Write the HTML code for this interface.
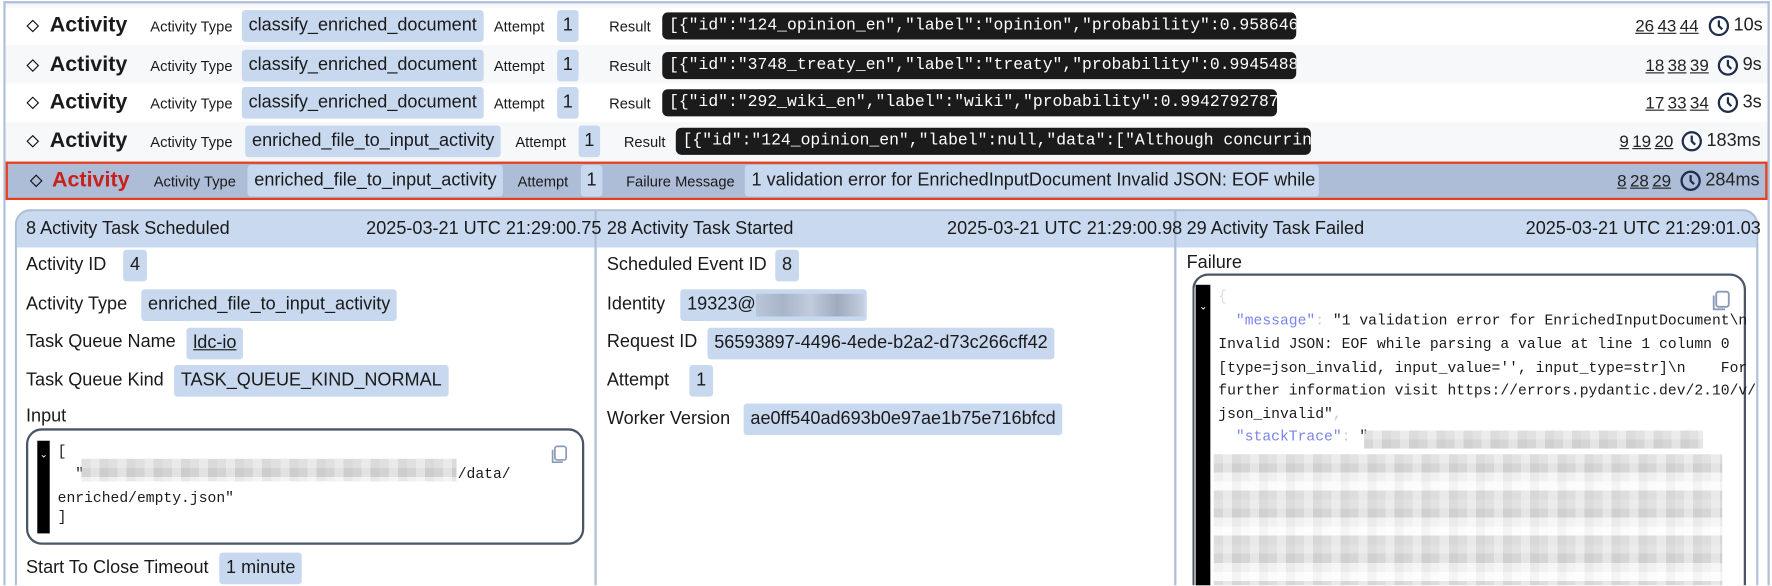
<!DOCTYPE html>
<html><head><meta charset="utf-8"><style>
*{margin:0;padding:0;box-sizing:border-box}
html,body{width:1772px;height:586px;overflow:hidden}
body{background:#fff;font-family:"Liberation Sans","DejaVu Sans",sans-serif;color:#1a1a1a;position:relative}
#w{position:absolute;left:0;top:0;width:1568px;height:518px;overflow:hidden;transform:scale(1.1301);transform-origin:0 0}
.a{position:absolute;white-space:nowrap}
.row{position:absolute;left:5px;width:1559px}
.dia{position:absolute;width:8px;height:8px;border:1.5px solid #111;transform:rotate(45deg)}
.act{font-weight:bold;font-size:19px}
.sm{font-size:13px}
.chip{background:#c8d8ef;border-radius:3px;font-size:16px;padding:0 6px;height:28px;line-height:28px}
.code{background:#1b1b1b;color:#fff;border-radius:5px;font-family:"Liberation Mono",monospace;font-size:14.5px;height:24px;line-height:24px;padding:0 6px;overflow:hidden}
.num{font-size:15px;color:#222}
.num u{margin-right:3px}
.lbl{font-size:16px}
.mono{font-family:"Liberation Mono","DejaVu Sans Mono",monospace;font-size:13px}
.blur{background:
repeating-linear-gradient(90deg,rgba(255,255,255,0) 0 8px,rgba(255,255,255,.35) 8px 16px,rgba(0,0,0,.04) 16px 24px),
repeating-linear-gradient(180deg,#d9d9d9 0 8px,#c9c9cb 8px 16px,#ececec 16px 24px,#fafafa 24px 32px,#d2d2d4 32px 40px);}
</style></head><body><div id="w">
<div class="a" style="left:3px;top:1px;width:1563px;height:517px;border:2px solid #b0bfd9;border-bottom:none;background:#f7f8fa"></div>

<div class="row" style="top:7px;height:33px;background:#fff"></div>
<div class="row" style="top:40px;height:34px;background:#f7f8fa"></div>
<div class="row" style="top:74px;height:34px;background:#fff"></div>
<div class="row" style="top:108px;height:34px;background:#f7f8fa"></div>
<div class="a" style="left:5px;top:143px;width:1559px;height:34px;background:#adbdd8;border:2px solid #e8401c"></div>
<div class="row" style="top:177px;height:341px;background:#fff"></div>

<div class="dia" style="left:25px;top:19px"></div>
<div class="a act" style="left:44px;top:12px">Activity</div>
<div class="a sm" style="left:133px;top:16px">Activity Type</div>
<div class="a chip" style="left:214px;top:9px">classify_enriched_document</div>
<div class="a sm" style="left:437px;top:16px">Attempt</div>
<div class="a chip" style="left:493px;top:9px;padding:0 5px">1</div>
<div class="a sm" style="left:539px;top:16px">Result</div>
<div class="a code" style="left:586px;top:11px;width:561px">[{"id":"124_opinion_en","label":"opinion","probability":0.958646452840699</div>
<div class="a num" style="left:1447px;top:15px"><u>26</u><u>43</u><u>44</u></div>

<div class="dia" style="left:25px;top:54px"></div>
<div class="a act" style="left:44px;top:47px">Activity</div>
<div class="a sm" style="left:133px;top:51px">Activity Type</div>
<div class="a chip" style="left:214px;top:44px">classify_enriched_document</div>
<div class="a sm" style="left:437px;top:51px">Attempt</div>
<div class="a chip" style="left:493px;top:44px;padding:0 5px">1</div>
<div class="a sm" style="left:539px;top:51px">Result</div>
<div class="a code" style="left:586px;top:46px;width:561px">[{"id":"3748_treaty_en","label":"treaty","probability":0.9945488727818601</div>
<div class="a num" style="left:1456px;top:50px"><u>18</u><u>38</u><u>39</u></div>

<div class="dia" style="left:25px;top:87px"></div>
<div class="a act" style="left:44px;top:80px">Activity</div>
<div class="a sm" style="left:133px;top:84px">Activity Type</div>
<div class="a chip" style="left:214px;top:77px">classify_enriched_document</div>
<div class="a sm" style="left:437px;top:84px">Attempt</div>
<div class="a chip" style="left:493px;top:77px;padding:0 5px">1</div>
<div class="a sm" style="left:539px;top:84px">Result</div>
<div class="a code" style="left:586px;top:79px;width:544px">[{"id":"292_wiki_en","label":"wiki","probability":0.9942792787077419}]</div>
<div class="a num" style="left:1456px;top:83px"><u>17</u><u>33</u><u>34</u></div>

<div class="dia" style="left:25px;top:121px"></div>
<div class="a act" style="left:44px;top:114px">Activity</div>
<div class="a sm" style="left:133px;top:118px">Activity Type</div>
<div class="a chip" style="left:217px;top:111px">enriched_file_to_input_activity</div>
<div class="a sm" style="left:456px;top:118px">Attempt</div>
<div class="a chip" style="left:512px;top:111px;padding:0 5px">1</div>
<div class="a sm" style="left:552px;top:118px">Result</div>
<div class="a code" style="left:598px;top:113px;width:562px">[{"id":"124_opinion_en","label":null,"data":["Although concurring in the</div>
<div class="a num" style="left:1433px;top:117px"><u>9</u><u>19</u><u>20</u></div>

<div class="dia" style="left:28px;top:156px"></div>
<div class="a act" style="left:46px;top:149px;color:#c8201a">Activity</div>
<div class="a sm" style="left:136px;top:153px">Activity Type</div>
<div class="a chip" style="left:219px;top:146px">enriched_file_to_input_activity</div>
<div class="a sm" style="left:458px;top:153px">Attempt</div>
<div class="a chip" style="left:514px;top:146px;padding:0 5px">1</div>
<div class="a sm" style="left:554px;top:153px">Failure Message</div>
<div class="a chip" style="left:659px;top:146px;width:508px;overflow:hidden">1 validation error for EnrichedInputDocument Invalid JSON: EOF while parsing</div>
<div class="a num" style="left:1431px;top:152px"><u>8</u><u>28</u><u>29</u></div>

<svg class="a" style="left:1511px;top:13px" width="20" height="20" viewBox="0 0 20 20"><circle cx="10" cy="10" r="8" fill="none" stroke="#1f2d4a" stroke-width="2"/><path d="M10 5v5l3 3" fill="none" stroke="#1f2d4a" stroke-width="2"/></svg>
<div class="a num" style="left:1534px;top:14px;font-size:16px">10s</div>
<svg class="a" style="left:1519px;top:48px" width="20" height="20" viewBox="0 0 20 20"><circle cx="10" cy="10" r="8" fill="none" stroke="#1f2d4a" stroke-width="2"/><path d="M10 5v5l3 3" fill="none" stroke="#1f2d4a" stroke-width="2"/></svg>
<div class="a num" style="left:1542px;top:49px;font-size:16px">9s</div>
<svg class="a" style="left:1519px;top:81px" width="20" height="20" viewBox="0 0 20 20"><circle cx="10" cy="10" r="8" fill="none" stroke="#1f2d4a" stroke-width="2"/><path d="M10 5v5l3 3" fill="none" stroke="#1f2d4a" stroke-width="2"/></svg>
<div class="a num" style="left:1542px;top:82px;font-size:16px">3s</div>
<svg class="a" style="left:1487px;top:115px" width="20" height="20" viewBox="0 0 20 20"><circle cx="10" cy="10" r="8" fill="none" stroke="#1f2d4a" stroke-width="2"/><path d="M10 5v5l3 3" fill="none" stroke="#1f2d4a" stroke-width="2"/></svg>
<div class="a num" style="left:1510px;top:116px;font-size:16px">183ms</div>
<svg class="a" style="left:1486px;top:150px" width="20" height="20" viewBox="0 0 20 20"><circle cx="10" cy="10" r="8" fill="none" stroke="#1f2d4a" stroke-width="2"/><path d="M10 5v5l3 3" fill="none" stroke="#1f2d4a" stroke-width="2"/></svg>
<div class="a num" style="left:1509px;top:151px;font-size:16px">284ms</div>

<div class="a" style="left:13px;top:185px;width:1543px;height:333px;border:2px solid #b0bfd9;border-bottom:none;border-radius:14px 14px 0 0;background:#fff"></div>
<div class="a" style="left:15px;top:187px;width:1539px;height:32px;background:#c9d9ef;border-radius:12px 12px 0 0"></div>
<div class="a" style="left:526px;top:186px;width:2px;height:332px;background:#b0bfd9"></div>
<div class="a" style="left:1039px;top:186px;width:2px;height:332px;background:#b0bfd9"></div>

<div class="a lbl" style="left:23px;top:194px">8 Activity Task Scheduled</div>
<div class="a lbl" style="left:324px;top:194px">2025-03-21 UTC 21:29:00.75</div>
<div class="a lbl" style="left:537px;top:194px">28 Activity Task Started</div>
<div class="a lbl" style="left:838px;top:194px">2025-03-21 UTC 21:29:00.98</div>
<div class="a lbl" style="left:1050px;top:194px">29 Activity Task Failed</div>
<div class="a lbl" style="left:1350px;top:194px">2025-03-21 UTC 21:29:01.03</div>

<div class="a lbl" style="left:23px;top:226px">Activity ID</div>
<div class="a chip" style="left:109px;top:221px;padding:0 6px">4</div>
<div class="a lbl" style="left:23px;top:261px">Activity Type</div>
<div class="a chip" style="left:125px;top:256px">enriched_file_to_input_activity</div>
<div class="a lbl" style="left:23px;top:294px">Task Queue Name</div>
<div class="a chip" style="left:165px;top:290px"><u>ldc-io</u></div>
<div class="a lbl" style="left:23px;top:328px">Task Queue Kind</div>
<div class="a chip" style="left:154px;top:323px">TASK_QUEUE_KIND_NORMAL</div>
<div class="a lbl" style="left:23px;top:360px">Input</div>
<div class="a" style="left:23px;top:379px;width:494px;height:103px;border:2px solid #4a5568;border-radius:14px"></div>
<div class="a" style="left:33px;top:390px;width:11px;height:82px;background:#000"></div>
<div class="a" style="left:35px;top:397px;color:#fff;font-size:9px">⌄</div>
<div class="a mono" style="left:51px;top:392px">[</div>
<div class="a mono" style="left:51px;top:412px">&nbsp;&nbsp;"</div>
<div class="a blur" style="left:72px;top:406px;width:332px;height:20px;opacity:.8"></div>
<div class="a mono" style="left:405px;top:412px">/data/</div>
<div class="a mono" style="left:51px;top:433px">enriched/empty.json"</div>
<div class="a mono" style="left:51px;top:450px">]</div>
<svg class="a" style="left:486px;top:394px" width="16" height="18" viewBox="0 0 16 18"><rect x="5" y="1" width="10" height="12" rx="2" fill="none" stroke="#8a9bb8" stroke-width="1.5"/><path d="M3 4v11h9" fill="none" stroke="#8a9bb8" stroke-width="1.5"/></svg>
<div class="a lbl" style="left:23px;top:494px">Start To Close Timeout</div>
<div class="a chip" style="left:194px;top:489px">1 minute</div>

<div class="a lbl" style="left:537px;top:226px">Scheduled Event ID</div>
<div class="a chip" style="left:686px;top:221px">8</div>
<div class="a lbl" style="left:537px;top:261px">Identity</div>
<div class="a chip" style="left:602px;top:256px;width:165px">19323@</div>
<div class="a" style="left:669px;top:260px;width:96px;height:20px;background:linear-gradient(90deg,#b8c3d6,#a4b0c4,#c0cadb,#9aa5b8,#c4cfe0);opacity:.9"></div>
<div class="a lbl" style="left:537px;top:294px">Request ID</div>
<div class="a chip" style="left:626px;top:290px">56593897-4496-4ede-b2a2-d73c266cff42</div>
<div class="a lbl" style="left:537px;top:328px">Attempt</div>
<div class="a chip" style="left:610px;top:323px">1</div>
<div class="a lbl" style="left:537px;top:362px">Worker Version</div>
<div class="a chip" style="left:658px;top:357px">ae0ff540ad693b0e97ae1b75e716bfcd</div>

<div class="a lbl" style="left:1050px;top:224px">Failure</div>
<div class="a" style="left:1055px;top:242px;width:490px;height:276px;border:2px solid #4a5568;border-bottom:none;border-radius:14px 14px 0 0"></div>
<div class="a" style="left:1058px;top:252px;width:13px;height:266px;background:#000"></div>
<div class="a" style="left:1061px;top:266px;color:#fff;font-size:9px">⌄</div>
<svg class="a" style="left:1513px;top:257px" width="18" height="20" viewBox="0 0 16 18"><rect x="5" y="1" width="10" height="12" rx="2" fill="none" stroke="#8a9bb8" stroke-width="1.5"/><path d="M3 4v11h9" fill="none" stroke="#8a9bb8" stroke-width="1.5"/></svg>
<div class="a mono" style="left:1078px;top:255px;color:#ddd">{</div>
<div class="a mono" style="left:1078px;top:276px">&nbsp;&nbsp;<span style="color:#7a86e8">"message"</span><span style="color:#ccc">:</span> "1 validation error for EnrichedInputDocument\n</div>
<div class="a mono" style="left:1078px;top:297px">Invalid JSON: EOF while parsing a value at line 1 column 0</div>
<div class="a mono" style="left:1078px;top:318px">[type=json_invalid, input_value='', input_type=str]\n&nbsp;&nbsp;&nbsp;&nbsp;For</div>
<div class="a mono" style="left:1078px;top:338px">further information visit https://errors.pydantic.dev/2.10/v/</div>
<div class="a mono" style="left:1078px;top:359px">json_invalid"<span style="color:#ccc">,</span></div>
<div class="a mono" style="left:1078px;top:379px">&nbsp;&nbsp;<span style="color:#7a86e8">"stackTrace"</span><span style="color:#ccc">:</span> "</div>
<div class="a blur" style="left:1207px;top:381px;width:300px;height:16px;opacity:.75"></div>
<div class="a blur" style="left:1074px;top:402px;width:450px;height:116px;opacity:.75"></div>
</div></body></html>
